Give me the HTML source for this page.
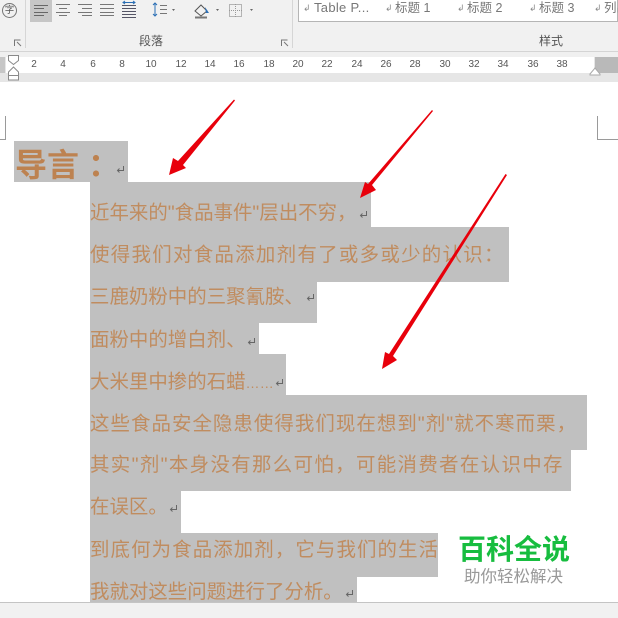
<!DOCTYPE html>
<html><head><meta charset="utf-8"><style>
html,body{margin:0;padding:0}
body{width:618px;height:618px;position:relative;overflow:hidden;background:#fff;font-family:"Liberation Sans","Noto Sans CJK SC",sans-serif}
.a{position:absolute}
.s{position:absolute;background:#c0c0c0;left:90px}
.t{position:absolute;left:90px;font-size:19.45px;line-height:24px;height:24px;color:#c08c5f;white-space:nowrap;letter-spacing:0}
.r{position:absolute;font-size:10px;color:#555;line-height:12px;width:20px;text-align:center;top:59px}
.st{position:absolute;top:0;font-size:12.5px;line-height:16px;color:#777;white-space:nowrap}
.k{position:absolute;top:0;font-size:9px;line-height:16px;color:#888}
.pm{position:absolute;width:9px;height:8px}
</style></head><body>
<div class="a" style="left:0;top:0;width:618px;height:52px;background:#f1f1f1"></div>
<div class="a" style="left:0;top:51px;width:618px;height:1px;background:#d4d4d4"></div>
<div class="a" style="left:25px;top:0;width:1px;height:48px;background:#d6d6d6"></div>
<div class="a" style="left:292px;top:0;width:1px;height:48px;background:#d6d6d6"></div>
<div class="a" style="left:298px;top:-1px;width:320px;height:23px;background:#fff;border:1px solid #b5b5b5;box-sizing:border-box"></div>
<div class="a" style="left:30px;top:0;width:22px;height:22px;background:#c6c6c6"></div>
<div class="a" style="left:4px;top:4px;width:11px;font-size:9.500px;line-height:13px;text-align:center;color:#555">字</div>
<svg class="a" style="left:0;top:0" width="292" height="50" fill="none" stroke="#777" stroke-width="1">
<circle cx="9.500" cy="10.500" r="7"/>
<path d="M34 5.500h14M34 8.500h10M34 12.500h14M34 15.500h10" stroke="#666"/>
<path d="M56 4.500h14M59 8.500h8M56 12.500h14M59 15.500h8"/>
<path d="M78 4.500h14M82 8.500h10M78 12.500h14M82 15.500h10"/>
<path d="M100 4.500h14M100 8.500h14M100 12.500h14M100 15.500h14"/>
<path d="M122 5.500h14M122 8.500h14M122 11.500h14M122 14.500h14M122 17.500h14" stroke="#556"/>
<path d="M123 2.500h12M125 1l-2 1.500 2 1.500M133 1l2 1.500-2 1.500" stroke="#2b6fb5"/>
<path d="M155 3v13M153 5l2-2 2 2M153 14l2 2 2-2" stroke="#2b6fb5"/>
<path d="M160 5.500h7M160 9.500h7M160 13.500h7"/>
<path d="M172 9l3 0-1.500 2z" fill="#666" stroke="none"/>
<path d="M195 11l6-6 6 6-6 5z" stroke="#555"/><path d="M195 17.500h12" stroke="#777" stroke-width="2"/><path d="M205 7l4 6 -3 0z" fill="#2b6fb5" stroke="none"/>
<path d="M216 9l3 0-1.500 2z" fill="#666" stroke="none"/>
<rect x="229.500" y="4.500" width="12" height="12" stroke="#777" stroke-dasharray="1 1"/><path d="M229 10.500h13M235.500 4v13" stroke="#999" stroke-dasharray="1 1"/>
<path d="M250 9l3 0-1.500 2z" fill="#666" stroke="none"/>
<path d="M14.500 46v-6h6M17 42l4 4" stroke="#777"/>
<path d="M281.500 46v-6h6M284 42l4 4" stroke="#777"/>
</svg>
<div class="k" style="left:303px">↲</div><div class="st" style="left:314px;font-size:13px;letter-spacing:.3px">Table P...</div>
<div class="k" style="left:385px">↲</div><div class="st" style="left:395px">标题 1</div>
<div class="k" style="left:457px">↲</div><div class="st" style="left:467px">标题 2</div>
<div class="k" style="left:529px">↲</div><div class="st" style="left:539px">标题 3</div>
<div class="k" style="left:594px">↲</div><div class="st" style="left:604px">列出</div>
<div class="a" style="left:139px;top:34px;font-size:12px;line-height:14px;color:#555">段落</div>
<div class="a" style="left:539px;top:34px;font-size:12px;line-height:14px;color:#555">样式</div>

<div class="a" style="left:0;top:52px;width:618px;height:30px;background:#e6e6e6"></div>
<div class="a" style="left:0;top:52px;width:618px;height:5px;background:#f0f0f0"></div>
<div class="a" style="left:6px;top:57px;width:588px;height:16px;background:#fff"></div>
<div class="a" style="left:0;top:57px;width:5px;height:16px;background:#c6c6c6"></div>
<div class="a" style="left:595px;top:57px;width:23px;height:16px;background:#b9b9b9"></div>
<div class="r" style="left:24px">2</div><div class="r" style="left:53px">4</div><div class="r" style="left:83px">6</div><div class="r" style="left:112px">8</div><div class="r" style="left:141px">10</div><div class="r" style="left:171px">12</div><div class="r" style="left:200px">14</div><div class="r" style="left:229px">16</div><div class="r" style="left:259px">18</div><div class="r" style="left:288px">20</div><div class="r" style="left:317px">22</div><div class="r" style="left:347px">24</div><div class="r" style="left:376px">26</div><div class="r" style="left:405px">28</div><div class="r" style="left:435px">30</div><div class="r" style="left:464px">32</div><div class="r" style="left:493px">34</div><div class="r" style="left:523px">36</div><div class="r" style="left:552px">38</div>
<svg class="a" style="left:0;top:50px" width="618" height="35" fill="#fff" stroke="#8a8a8a" stroke-width="1">
<path d="M8.500 5.500h10v5l-5 4-5-4z"/><path d="M13.500 17l5 5v8h-10v-8z"/><path d="M8.500 25.500h10" />
<path d="M590 24l5-6 5 6v1h-10z" stroke="#aaa"/>
</svg>

<div class="a" style="left:0;top:82px;width:618px;height:520px;background:#fff"></div>
<svg class="a" style="left:0;top:110px" width="618" height="32" fill="none" stroke="#9a9a9a">
<path d="M5.500 6v23.500H0M597.500 6v23.500H618"/>
</svg>

<div class="s" style="left:14px;top:141px;width:114px;height:41px"></div>
<div class="s" style="top:182px;width:281px;height:45px"></div>
<div class="s" style="top:227px;width:419px;height:55px"></div>
<div class="s" style="top:282px;width:227px;height:41px"></div>
<div class="s" style="top:323px;width:169px;height:31px"></div>
<div class="s" style="top:354px;width:196px;height:41px"></div>
<div class="s" style="top:395px;width:497px;height:55px"></div>
<div class="s" style="top:450px;width:481px;height:41px"></div>
<div class="s" style="top:491px;width:91px;height:42px"></div>
<div class="s" style="top:533px;width:348px;height:44px"></div>
<div class="s" style="top:577px;width:267px;height:25px"></div>

<div class="a" style="left:15px;top:146px;font-size:32px;line-height:38px;font-weight:bold;color:#bd8250;white-space:nowrap">导言<span style="margin-left:9px">：</span></div>
<div class="t" style="top:201px">近年来的"食品事件"层出不穷，</div>
<div class="t" style="top:243px;letter-spacing:1.3px">使得我们对食品添加剂有了或多或少的认识：</div>
<div class="t" style="top:285px">三鹿奶粉中的三聚氰胺、</div>
<div class="t" style="top:328px">面粉中的增白剂、</div>
<div class="t" style="top:370px">大米里中掺的石蜡<span style="font-size:14px;letter-spacing:.2px">……</span></div>
<div class="t" style="top:412px;letter-spacing:1.05px">这些食品安全隐患使得我们现在想到"剂"就不寒而栗，</div>
<div class="t" style="top:453px;letter-spacing:1.35px">其实"剂"本身没有那么可怕，可能消费者在认识中存</div>
<div class="t" style="top:495px">在误区。</div>
<div class="t" style="top:538px;letter-spacing:1.1px">到底何为食品添加剂，它与我们的生活</div>
<div class="t" style="top:580px">我就对这些问题进行了分析。</div>

<svg width="0" height="0" style="position:absolute"><defs><path id="p" d="M7.500 0v4.500H1.500M3.500 2.500l-2 2 2 2" fill="none" stroke="#666" stroke-width="1"/></defs></svg>
<svg class="pm" style="left:116px;top:166px"><use href="#p"/></svg>
<svg class="pm" style="left:359px;top:211px"><use href="#p"/></svg>
<svg class="pm" style="left:306px;top:294px"><use href="#p"/></svg>
<svg class="pm" style="left:247px;top:338px"><use href="#p"/></svg>
<svg class="pm" style="left:275px;top:379px"><use href="#p"/></svg>
<svg class="pm" style="left:169px;top:505px"><use href="#p"/></svg>
<svg class="pm" style="left:345px;top:590px"><use href="#p"/></svg>

<div class="a" style="left:438px;top:526px;width:157px;height:70px;background:#fff"></div>
<div class="a" style="left:458px;top:534px;font-size:28px;line-height:32px;font-weight:bold;color:#17bd3f;white-space:nowrap">百科全说</div>
<div class="a" style="left:464px;top:567px;font-size:16.500px;line-height:20px;color:#999;white-space:nowrap">助你轻松解决</div>

<div class="a" style="left:0;top:602px;width:618px;height:16px;background:#f1f1f1;border-top:1px solid #c4c4c4;box-sizing:border-box"></div>

<svg class="a" style="left:0;top:0" width="618" height="618" fill="#e8000b" stroke="none">
<path d="M234 99.500L235 100.500L183 165L186 168L169 175L173 158L178 161Z"/>
<path d="M432 110L433 111L372 185L376 190L360 198L365 182L368 184Z"/>
<path d="M505.500 174L507 175L393 356L397 360L382 369L385 352L389 354Z"/>
</svg>
</body></html>
